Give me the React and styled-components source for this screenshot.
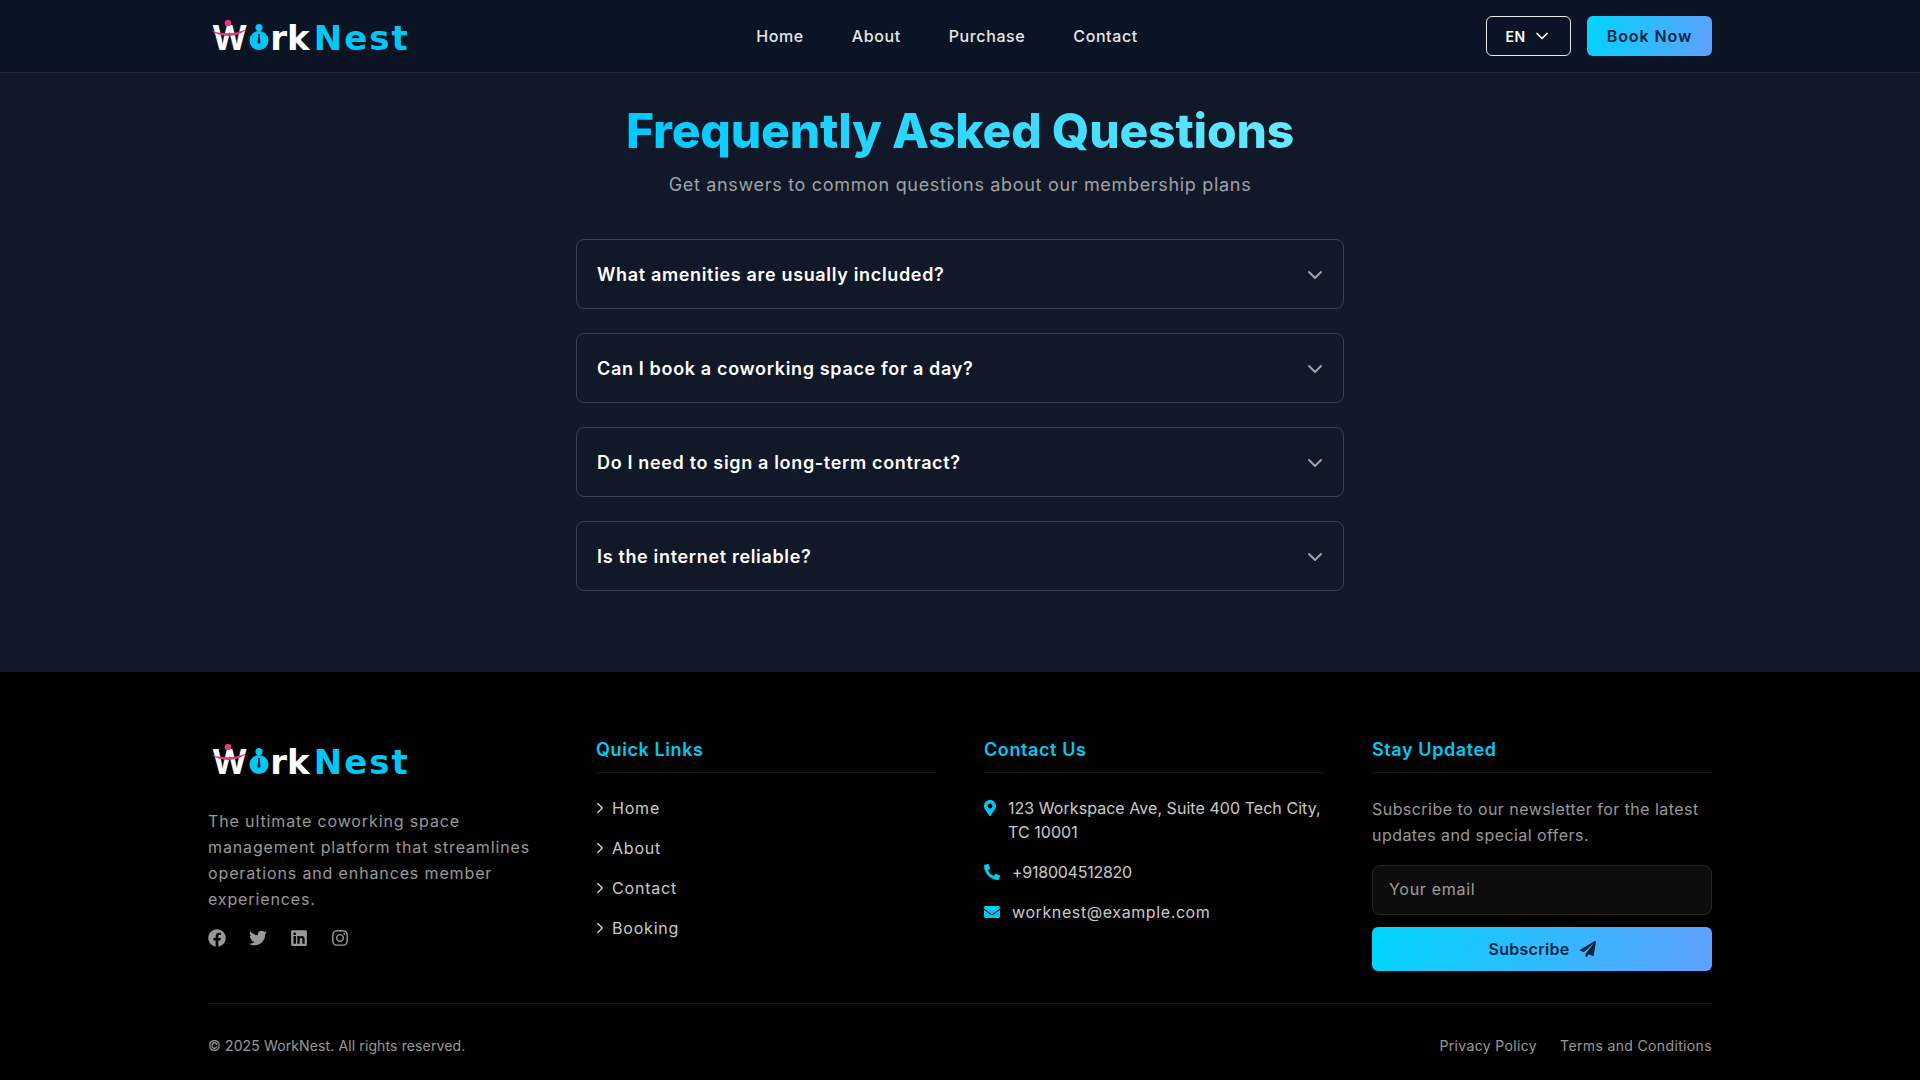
import React from 'react';
import styled, { createGlobalStyle } from 'styled-components';
import { ChevronDown, ChevronRight } from 'lucide-react';
import {
  FaFacebook,
  FaTwitter,
  FaLinkedin,
  FaInstagram,
  FaMapMarkerAlt,
  FaPhoneAlt,
  FaEnvelope,
  FaPaperPlane,
} from 'react-icons/fa';

const cyan = '#00c8f5';
const gradient = 'linear-gradient(100deg, #00d4ff, #5fa0ff)';
const muted = 'rgba(255, 255, 255, 0.6)';
const soft = 'rgba(255, 255, 255, 0.8)';
const line = 'rgba(255, 255, 255, 0.1)';

const GlobalStyle = createGlobalStyle`
  * { box-sizing: border-box; }
  body {
    margin: 0;
    background: #111827;
    font-family: Inter, "Noto Sans", sans-serif;
    color: #fff;
  }
`;

const Page = styled.div`
  min-height: 1080px;
  display: flex;
  flex-direction: column;
`;

const Header = styled.header`
  height: 73px;
  background: #0a1424;
  border-bottom: 1px solid #1f2937;
`;

const Bar = styled.div`
  width: 1504px;
  height: 72px;
  margin: 0 auto;
  display: flex;
  justify-content: space-between;
  align-items: center;
`;

const LogoWrap = styled.div`
  display: flex;
  align-items: baseline;
  width: 200px;
  height: 48px;
  padding: 3px 0 0 4px;
  font-family: "DejaVu Sans", sans-serif;
  font-weight: 700;
  font-size: 34px;
  line-height: 45px;
`;

const LogoInitial = styled.span`
  position: relative;
  color: #fff;
  font-family: Inter, sans-serif;
  letter-spacing: 2px;
`;

const LogoWhite = styled.span`
  color: #fff;
`;

const LogoBlue = styled.span`
  color: ${cyan};
  margin-left: 4px;
  letter-spacing: 2px;
`;

const LogoMark = styled.svg`
  display: block;
  flex: none;
  margin-right: 1px;
`;

const Swoosh = styled.svg`
  position: absolute;
  left: -3px;
  top: 4px;
`;

const Nav = styled.nav`
  display: flex;
  gap: 48px;
`;

const NavLink = styled.a`
  font-size: 16px;
  font-weight: 500;
  letter-spacing: 0.6px;
  color: #e5e7eb;
`;

const Actions = styled.div`
  display: flex;
  justify-content: flex-end;
  align-items: center;
  gap: 16px;
`;

const LangButton = styled.button`
  width: 85px;
  height: 40px;
  display: flex;
  align-items: center;
  justify-content: center;
  gap: 6px;
  background: transparent;
  border: 1px solid #e5e7eb;
  border-radius: 6px;
  color: #fff;
  font: 600 14px Inter, sans-serif;
  letter-spacing: 0.5px;
`;

const BookButton = styled.button`
  width: 125px;
  height: 40px;
  border: 0;
  border-radius: 6px;
  background: ${gradient};
  color: #0a2540;
  font: 600 16px Inter, sans-serif;
  letter-spacing: 0.9px;
`;

const Main = styled.main`
  padding: 26px 0 81px;
  display: flex;
  flex-direction: column;
  align-items: center;
`;

const Title = styled.h1`
  margin: 0;
  font-size: 48px;
  line-height: 64px;
  font-weight: 800;
  letter-spacing: -0.2px;
  background: linear-gradient(90deg, #00c8ff, #67e8ff);
  -webkit-background-clip: text;
  background-clip: text;
  color: transparent;
`;

const Subtitle = styled.p`
  margin: 8px 0 0;
  font-size: 18px;
  line-height: 28px;
  color: ${muted};
  letter-spacing: 0.68px;
`;

const FaqList = styled.div`
  width: 768px;
  margin-top: 40px;
  display: flex;
  flex-direction: column;
  gap: 24px;
`;

const FaqRow = styled.div`
  height: 70px;
  padding: 0 16px 0 20px;
  display: flex;
  align-items: center;
  justify-content: space-between;
  border: 1px solid #374151;
  border-radius: 8px;

  svg {
    margin-top: 1px;
  }
`;

const Question = styled.span`
  font-size: 18px;
  font-weight: 600;
  letter-spacing: 0.66px;
`;

const Footer = styled.footer`
  flex: 1;
  background: #000;
  padding-top: 64px;
`;

const FooterInner = styled.div`
  width: 1504px;
  margin: 0 auto;
`;

const Columns = styled.div`
  display: grid;
  grid-template-columns: repeat(4, 340px);
  column-gap: 48px;
  padding-bottom: 32px;
  border-bottom: 1px solid ${line};
`;

const Blurb = styled.p`
  margin: 24px 0 0;
  font-size: 16px;
  line-height: 26px;
  color: ${muted};
  letter-spacing: 0.87px;
`;

const Socials = styled.div`
  display: flex;
  align-items: center;
  gap: 23px;
  margin-top: 17px;
  color: ${muted};
  font-size: 18px;
`;

const ColTitle = styled.h3`
  margin: 0 0 23px;
  padding-bottom: 8px;
  border-bottom: 1px solid ${line};
  font-size: 18px;
  line-height: 28px;
  font-weight: 600;
  color: ${cyan};
  letter-spacing: 0.6px;
`;

const LinkList = styled.div`
  display: flex;
  flex-direction: column;
  gap: 16px;
`;

const LinkRow = styled.a`
  display: flex;
  align-items: center;
  gap: 3px;
  font-size: 16px;
  line-height: 24px;
  color: ${soft};
  letter-spacing: 0.8px;

  svg {
    margin-left: -5px;
  }
`;

const ContactRow = styled.div`
  display: flex;
  align-items: flex-start;
  gap: 12px;
  font-size: 16px;
  line-height: 24px;
  color: ${soft};
  letter-spacing: ${(p) => p.$spacing}px;

  svg {
    flex: none;
    width: ${(p) => p.$iconWidth}px;
    height: 16px;
    margin-top: 4px;
    color: ${cyan};
  }
`;

const Newsletter = styled.p`
  margin: 0;
  font-size: 16px;
  line-height: 26px;
  color: ${muted};
  letter-spacing: 0.45px;
`;

const EmailInput = styled.input`
  display: block;
  width: 100%;
  height: 50px;
  margin-top: 17px;
  padding: 0 16px 2px;
  background: #0d0d0d;
  border: 1px solid #262626;
  border-radius: 8px;
  color: #fff;
  font: 400 16px Inter, sans-serif;
  letter-spacing: 0.7px;

  &::placeholder {
    color: ${muted};
  }
`;

const SubscribeButton = styled.button`
  width: 100%;
  height: 44px;
  margin-top: 12px;
  display: flex;
  align-items: center;
  justify-content: center;
  gap: 10px;
  border: 0;
  border-radius: 6px;
  background: ${gradient};
  color: #0a2540;
  font: 600 16px Inter, sans-serif;
  letter-spacing: 0.3px;
`;

const BottomBar = styled.div`
  height: 82px;
  display: flex;
  align-items: center;
  justify-content: space-between;
  font-size: 14px;
  color: ${muted};
  letter-spacing: 0.36px;
`;

const Copyright = styled.span`
  letter-spacing: 0.12px;
`;

const LegalLinks = styled.div`
  display: flex;
  gap: 23px;
`;

const Logo = () => (
  <LogoWrap>
    <LogoInitial>
      <Swoosh width="42" height="20" viewBox="0 0 42 20">
        <circle cx="19" cy="4" r="3.2" fill="#f0307a" />
        <path d="M1 11 C12 16 28 15 38 10 C28 19 12 19 1 11 Z" fill="#f0307a" />
      </Swoosh>
      W
    </LogoInitial>
    <LogoMark width="20" height="26" viewBox="0 0 20 26">
      <circle cx="10" cy="3.6" r="3.6" fill={cyan} />
      <circle cx="10" cy="16.5" r="9.5" fill={cyan} />
      <path d="M9 10 h2 l-0.3 2.5 l0.8 6 l-1.5 1.5 l-1.5 -1.5 l0.8 -6 Z" fill="#0a1424" />
    </LogoMark>
    <LogoWhite>rk</LogoWhite>
    <LogoBlue>Nest</LogoBlue>
  </LogoWrap>
);

const questions = [
  'What amenities are usually included?',
  'Can I book a coworking space for a day?',
  'Do I need to sign a long-term contract?',
  'Is the internet reliable?',
];

const App = () => (
  <Page>
    <GlobalStyle />
    <Header>
      <Bar>
        <Logo />
        <Nav>
          <NavLink>Home</NavLink>
          <NavLink>About</NavLink>
          <NavLink>Purchase</NavLink>
          <NavLink>Contact</NavLink>
        </Nav>
        <Actions>
          <LangButton>
            EN <ChevronDown size={20} />
          </LangButton>
          <BookButton>Book Now</BookButton>
        </Actions>
      </Bar>
    </Header>

    <Main>
      <Title>Frequently Asked Questions</Title>
      <Subtitle>Get answers to common questions about our membership plans</Subtitle>
      <FaqList>
        {questions.map((q) => (
          <FaqRow key={q}>
            <Question>{q}</Question>
            <ChevronDown size={24} color="#9ca3af" />
          </FaqRow>
        ))}
      </FaqList>
    </Main>

    <Footer>
      <FooterInner>
        <Columns>
          <div>
            <Logo />
            <Blurb>
              The ultimate coworking space management platform that streamlines operations and
              enhances member experiences.
            </Blurb>
            <Socials>
              <FaFacebook />
              <FaTwitter />
              <FaLinkedin />
              <FaInstagram />
            </Socials>
          </div>

          <div>
            <ColTitle>Quick Links</ColTitle>
            <LinkList>
              {['Home', 'About', 'Contact', 'Booking'].map((l) => (
                <LinkRow key={l}>
                  <ChevronRight size={18} />
                  {l}
                </LinkRow>
              ))}
            </LinkList>
          </div>

          <div>
            <ColTitle>Contact Us</ColTitle>
            <LinkList>
              <ContactRow $iconWidth={12} $spacing={0.05}>
                <FaMapMarkerAlt />
                <span>123 Workspace Ave, Suite 400 Tech City, TC 10001</span>
              </ContactRow>
              <ContactRow $iconWidth={16} $spacing={-0.25}>
                <FaPhoneAlt />
                <span>+918004512820</span>
              </ContactRow>
              <ContactRow $iconWidth={16} $spacing={0.6}>
                <FaEnvelope />
                <span>worknest@example.com</span>
              </ContactRow>
            </LinkList>
          </div>

          <div>
            <ColTitle>Stay Updated</ColTitle>
            <Newsletter>Subscribe to our newsletter for the latest updates and special offers.</Newsletter>
            <EmailInput placeholder="Your email" />
            <SubscribeButton>
              Subscribe <FaPaperPlane size={16} />
            </SubscribeButton>
          </div>
        </Columns>

        <BottomBar>
          <Copyright>© 2025 WorkNest. All rights reserved.</Copyright>
          <LegalLinks>
            <span>Privacy Policy</span>
            <span>Terms and Conditions</span>
          </LegalLinks>
        </BottomBar>
      </FooterInner>
    </Footer>
  </Page>
);

export default App;
